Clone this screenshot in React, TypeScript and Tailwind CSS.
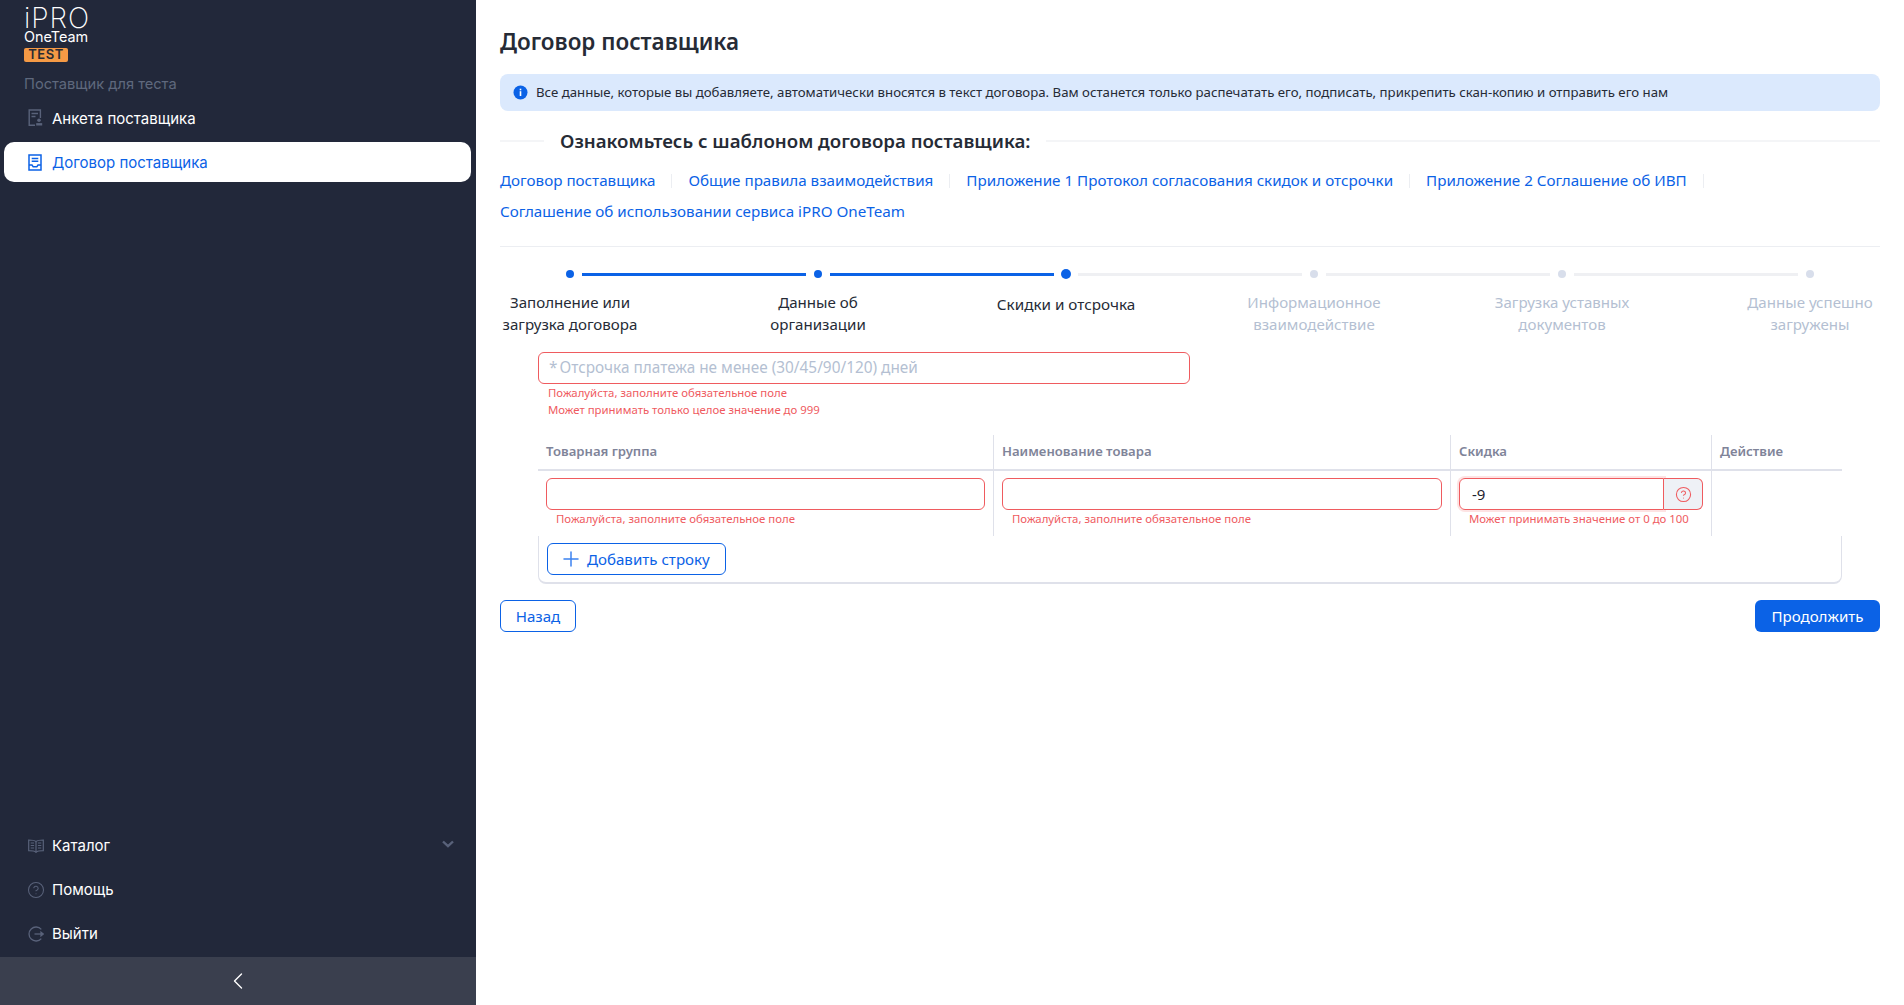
import { ChevronLeft, CircleHelp, Plus } from "lucide-react";

const sans = "font-['Noto_Sans','Open_Sans',sans-serif]";
const inter = "font-['Inter',sans-serif]";

function ProfileDocIcon() {
  return (
    <svg width="16" height="18" viewBox="0 0 16 18" fill="none" stroke="#59627a" strokeWidth="1.4">
      <path d="M7 16.3H1.2V1h11.2v8" />
      <path d="M3.5 4.5h6.5M3.5 7.5h4" />
      <circle cx="11" cy="11.3" r="1.8" fill="#59627a" stroke="none" />
      <path d="M8.2 16.5v-2.4h6v2.4z" fill="#59627a" stroke="none" />
    </svg>
  );
}

function ContractIcon() {
  return (
    <svg width="14" height="17" viewBox="0 0 14 17" fill="none" stroke="#0b62e6" strokeWidth="1.5">
      <path d="M1 16V1h12v15z" />
      <path d="M3.7 4.5h6.6M3.7 7.3h6.6" />
      <path d="M1 11h3l1.2 1.8h3.6L10 11h3" />
    </svg>
  );
}

function BookIcon() {
  return (
    <svg width="16" height="14" viewBox="0 0 16 14" fill="none" stroke="#59627a" strokeWidth="1.2">
      <path d="M8 2.6C6.5 1.2 4 1 .7 1v10.6c3.3 0 5.8.2 7.3 1.6 1.5-1.4 4-1.6 7.3-1.6V1C12 1 9.500 1.200 8 2.600z" />
      <path d="M8 2.600v10.600" />
      <path d="M2.700 4h3.400M2.700 6.500h3.400M2.700 9h3.400M9.900 4h3.400M9.900 6.500h3.400M9.900 9h3.400" />
    </svg>
  );
}

function ExitIcon() {
  return (
    <svg width="16" height="16" viewBox="0 0 16 16" fill="none" stroke="#59627a" strokeWidth="1.3">
      <path d="M13.300 3.400A7 7 0 1 0 13.300 12.600" />
      <path d="M6.500 8h8.500" />
      <path d="M13 6.200 15.200 8 13 9.800z" fill="#59627a" />
    </svg>
  );
}

function InfoIcon() {
  return (
    <svg width="15" height="15" viewBox="0 0 15 15" className="shrink-0">
      <circle cx="7.500" cy="7.500" r="7" fill="#0b62e6" />
      <rect x="6.700" y="6.200" width="1.600" height="4.800" fill="#fff" />
      <rect x="6.700" y="3.700" width="1.600" height="1.600" fill="#fff" />
    </svg>
  );
}

function MenuItem({ icon, label, active, low }: { icon: React.ReactNode; label: string; active?: boolean; low?: boolean }) {
  return (
    <div
      className={
        active
          ? "mx-1 flex h-10 w-[467px] items-center rounded-[10px] bg-white pl-[24px] text-[#0b62e6]"
          : "mx-1 flex h-[44px] w-[467px] items-center pl-[24px] text-white"
      }
    >
      <span className="flex w-6 shrink-0 items-center">{icon}</span>
      <span className={low ? "pt-[2px] text-[15px] leading-5" : "text-[15px] leading-5"}>{label}</span>
    </div>
  );
}

function Sidebar() {
  return (
    <aside className={`${inter} flex h-full w-[476px] shrink-0 flex-col bg-[#22283a]`}>
      <div className="pl-6 pt-[6px]">
        <div className="h-[24px] text-[28px] font-extralight leading-[24px] tracking-[1px] text-white">iPRO</div>
        <div className="text-[14.4px] leading-[14px] text-white">OneTeam</div>
        <div className="mt-[4px] flex h-[14px] w-[44px] items-center justify-center rounded-[2px] bg-[#f59a45] text-[13px] font-semibold tracking-[0.5px] text-[#2b2b33]">
          TEST
        </div>
        <div className="mt-[12px] text-[14.65px] leading-5 text-[#5f687d]">Поставщик для теста</div>
      </div>
      <div className="mt-[2px]">
        <MenuItem low icon={<ProfileDocIcon />} label="Анкета поставщика" />
      </div>
      <div className="mt-[2px]">
        <MenuItem low active icon={<ContractIcon />} label="Договор поставщика" />
      </div>
      <div className="mt-auto">
        <div className="relative">
          <MenuItem icon={<BookIcon />} label="Каталог" />
          <svg
            width="12"
            height="8"
            viewBox="0 0 12 8"
            fill="none"
            stroke="#59627a"
            strokeWidth="2.400"
            className="absolute right-[22px] top-[16px]"
          >
            <path d="M1 1.500 6 6.200l5-4.700" />
          </svg>
        </div>
        <MenuItem icon={<CircleHelp className="-ml-[1px] h-[18px] w-[18px] text-[#59627a]" strokeWidth={1.400} />} label="Помощь" />
        <MenuItem icon={<ExitIcon />} label="Выйти" />
      </div>
      <div className="mt-[1px] flex h-[48px] items-center justify-center bg-[#3a3f4e]">
        <ChevronLeft className="h-7 w-7 text-white" strokeWidth={1.200} />
      </div>
    </aside>
  );
}

const links = [
  "Договор поставщика",
  "Общие правила взаимодействия",
  "Приложение 1 Протокол согласования скидок и отсрочки",
  "Приложение 2 Соглашение об ИВП",
  "Соглашение об использовании сервиса iPRO OneTeam",
];

const steps = [
  { lines: ["Заполнение или", "загрузка договора"], state: "done" },
  { lines: ["Данные об", "организации"], state: "done" },
  { lines: ["Скидки и отсрочка"], state: "current" },
  { lines: ["Информационное", "взаимодействие"], state: "todo" },
  { lines: ["Загрузка уставных", "документов"], state: "todo" },
  { lines: ["Данные успешно", "загружены"], state: "todo" },
];

function Steps() {
  return (
    <div className="-mx-[54px] mt-[21px] grid grid-cols-6">
      {steps.map((s, i) => (
        <div key={s.lines[0]} className="flex flex-col items-center">
          <div className="relative flex h-3 w-full items-center justify-center">
            {i > 0 && (
              <div
                className={
                  s.state === "todo"
                    ? "absolute left-0 right-[136px] h-[3px] bg-[#eff0f3]"
                    : "absolute left-0 right-[136px] h-[3px] bg-[#0b62e6]"
                }
              />
            )}
            {i < 5 && (
              <div
                className={
                  s.state === "done"
                    ? "absolute left-[136px] right-0 h-[3px] bg-[#0b62e6]"
                    : "absolute left-[136px] right-0 h-[3px] bg-[#eff0f3]"
                }
              />
            )}
            <div
              className={
                s.state === "current"
                  ? "h-[10px] w-[10px] rounded-full bg-[#0b62e6]"
                  : s.state === "done"
                    ? "h-2 w-2 rounded-full bg-[#0b62e6]"
                    : "h-2 w-2 rounded-full bg-[#d8deeb]"
              }
            />
          </div>
          <div
            className={
              s.state === "todo"
                ? "mt-[11px] text-center text-[15.1px] leading-[22px] text-[#b4bfd2]"
                : s.state === "current"
                  ? "mt-[13px] text-center text-[15.25px] leading-[22px] text-[#262b36]"
                  : "mt-[11px] text-center text-[15.1px] leading-[22px] text-[#262b36]"
            }
          >
            {s.lines.map((l) => (
              <div key={l}>{l}</div>
            ))}
          </div>
        </div>
      ))}
    </div>
  );
}

function ErrorText({ children }: { children: React.ReactNode }) {
  return <div className="text-[11.4px] leading-[17px] text-[#ef5b5f]">{children}</div>;
}

function HeadCell({ label, first }: { label: string; first?: boolean }) {
  return (
    <div
      className={
        first
          ? "flex h-[36px] items-center border-b-2 border-[#dfe1ea] pl-2 text-[13.15px] font-semibold text-[#7f8499]"
          : "flex h-[36px] items-center border-b-2 border-l border-[#dfe1ea] pl-2 text-[13.15px] font-semibold text-[#7f8499]"
      }
    >
      {label}
    </div>
  );
}

function FieldCell({ first }: { first?: boolean }) {
  return (
    <div className={first ? "h-[65px] px-2 pt-[7px]" : "h-[65px] border-l border-[#dfe1ea] px-2 pt-[7px]"}>
      <div className="h-8 rounded-md border border-[#ef5b5f] bg-white" />
      <div className="pl-[10px]">
        <ErrorText>Пожалуйста, заполните обязательное поле</ErrorText>
      </div>
    </div>
  );
}

function DiscountTable() {
  return (
    <div className="ml-[38px] mt-[17px] w-[1304px]">
      <div className="grid grid-cols-[455px_457px_261px_131px]">
        <HeadCell first label="Товарная группа" />
        <HeadCell label="Наименование товара" />
        <HeadCell label="Скидка" />
        <HeadCell label="Действие" />
        <FieldCell first />
        <FieldCell />
        <div className="h-[65px] border-l border-[#dfe1ea] px-2 pt-[7px]">
          <div className="flex h-8">
            <div className="z-10 flex flex-1 items-center rounded-l-md border border-[#ef5b5f] pl-[12px] text-[15px] text-[#1f2430] shadow-[0_0_0_2px_#fde3e3]">
              -9
            </div>
            <div className="z-10 flex w-[39px] items-center justify-center rounded-r-md border border-l-0 border-[#ef5b5f] bg-[#eef1f6]">
              <CircleHelp className="h-[17px] w-[17px] text-[#ef5b5f]" strokeWidth={1.500} />
            </div>
          </div>
          <div className="pl-[10px]">
            <ErrorText>Может принимать значение от 0 до 100</ErrorText>
          </div>
        </div>
        <div className="h-[65px] border-l border-[#dfe1ea]" />
      </div>
      <div className="h-[48px] rounded-b-lg border-x border-b-2 border-[#dfe1ea] pl-2 pt-[7px]">
        <button className="flex h-8 w-[179px] items-center gap-1 rounded-md border border-[#0b62e6] bg-white pl-[11px] text-[15.1px] text-[#0b62e6]">
          <Plus className="h-6 w-6 text-[#3b82f0]" strokeWidth={1.500} />
          Добавить строку
        </button>
      </div>
    </div>
  );
}

export default function App() {
  return (
    <div className={`${sans} flex h-screen w-full overflow-hidden bg-white`}>
      <Sidebar />
      <main className="min-w-0 flex-1 px-6">
        <h1 className="mt-[24px] h-[36px] text-[22.45px] font-semibold leading-[36px] text-[#262b36]">Договор поставщика</h1>

        <div className="mt-[14px] flex h-[37px] items-center gap-2 rounded-lg bg-[#dbe9fd] pl-[13px] text-[13.23px] text-[#262b36]">
          <InfoIcon />
          <span>
            Все данные, которые вы добавляете, автоматически вносятся в текст договора. Вам останется только распечатать его, подписать, прикрепить скан-копию и отправить его нам
          </span>
        </div>

        <div className="mt-[16px] flex h-[28px] items-center">
          <div className="h-[2px] w-[44px] bg-[#f4f5f7]" />
          <div className="px-4 text-[18.67px] font-semibold text-[#262b36]">Ознакомьтесь с шаблоном договора поставщика:</div>
          <div className="h-[2px] flex-1 bg-[#f4f5f7]" />
        </div>

        <div className="mt-[10px] flex flex-wrap items-center pb-[19px]">
          {links.map((l, i) => (
            <div key={l} className="flex h-[31px] items-center text-[15.2px] text-[#0b62e6]">
              <span>{l}</span>
              {i < 4 && <span className="mx-4 h-[14px] w-px bg-[#eceef2]" />}
            </div>
          ))}
        </div>
        <div className="h-px bg-[#eceef2]" />

        <Steps />

        <div className="ml-[38px] mt-[17px] w-[652px]">
          <div className="flex h-[32px] items-center rounded-md border border-[#ef5b5f] pl-[10px] text-[15.36px] text-[#b4bfd2]">
            <span className="mr-[2px]">*</span>
            Отсрочка платежа не менее (30/45/90/120) дней
          </div>
          <div className="pl-[10px]">
            <ErrorText>Пожалуйста, заполните обязательное поле</ErrorText>
            <ErrorText>Может принимать только целое значение до 999</ErrorText>
          </div>
        </div>

        <DiscountTable />

        <div className="mt-[16px] flex justify-between">
          <button className="h-8 w-[76px] rounded-md border border-[#0b62e6] bg-white text-[15.1px] text-[#0b62e6]">Назад</button>
          <button className="h-8 w-[125px] rounded-md bg-[#0b62e6] text-[15.1px] text-white">Продолжить</button>
        </div>
      </main>
    </div>
  );
}
